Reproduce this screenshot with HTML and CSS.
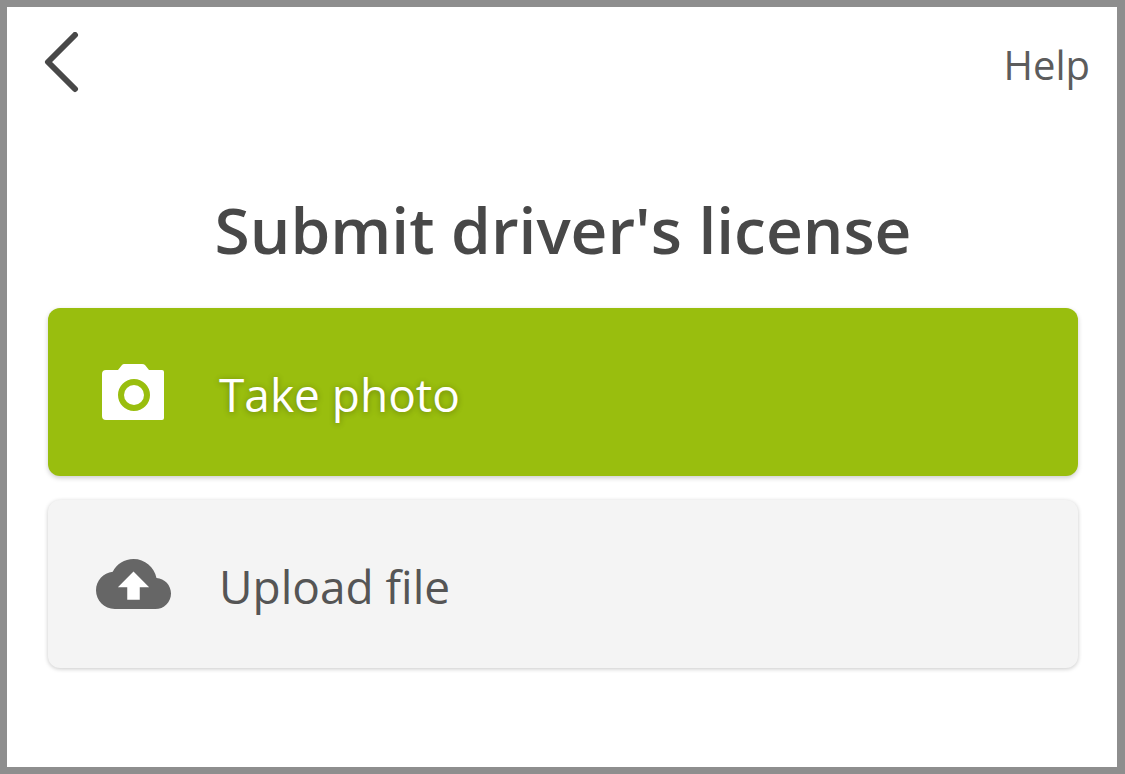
FILE: index.html
```html
<!DOCTYPE html>
<html lang="en">
<head>
<meta charset="utf-8">
<meta name="viewport" content="width=device-width, initial-scale=1">
<title>Submit driver's license</title>
<link rel="stylesheet" href="styles.css">
</head>
<body>
<div class="screen">
  <header class="topbar">
    <button class="back" type="button" aria-label="Back">
      <svg class="back-icon" viewBox="0 0 36 62" fill="none" stroke="currentColor" stroke-width="6" stroke-linecap="round" stroke-linejoin="round" aria-hidden="true"><path d="M32 3 5 30 32 57"/></svg>
    </button>
    <a class="help" href="#help">Help</a>
  </header>
  <main class="content">
    <h1 class="title">Submit driver's license</h1>
    <div class="actions">
      <button class="action action-primary" type="button">
        <svg class="action-icon" viewBox="0 0 75 56" aria-hidden="true">
          <path fill="currentColor" fill-rule="evenodd" d="M28 0h18q2 0 3 1l4 5h13q2 0 2 2v46q0 2-2 2H10q-4 0-4-4V10q0-4 4-4h12l4-5q1-1 2-1ZM38 15a16 16 0 1 0 0 32 16 16 0 0 0 0-32Z"/>
          <circle cx="38" cy="31" r="10" fill="currentColor"/>
        </svg>
        <span class="action-label">Take photo</span>
      </button>
      <button class="action action-secondary" type="button">
        <svg class="action-icon" viewBox="0 4 24 16" aria-hidden="true">
          <path fill="#666" d="M19.350 10.040C18.670 6.590 15.640 4 12 4 9.110 4 6.600 5.640 5.350 8.040 2.340 8.360 0 10.910 0 14c0 3.310 2.690 6 6 6h13c2.760 0 5-2.240 5-5 0-2.640-2.050-4.780-4.650-4.960z"/>
          <path fill="#fff" d="M14 13v4h-4v-4H7l5-5 5 5h-3z"/>
        </svg>
        <span class="action-label">Upload file</span>
      </button>
    </div>
  </main>
</div>
</body>
</html>
```
FILE: styles.css
```css
* {
  box-sizing: border-box;
}

body {
  margin: 0;
  font-family: "Open Sans", "Noto Sans", sans-serif;
  color: #484848;
}

.screen {
  min-height: 100vh;
  padding: 24px 24px 40px 32px;
  background: #fff;
  border: 7px solid #8e8e8e;
  border-right-width: 8px;
}

.topbar {
  display: flex;
  align-items: center;
  justify-content: space-between;
}

.back {
  display: flex;
  padding: 0 4px;
  border: 0;
  background: none;
  color: inherit;
  cursor: pointer;
}

.back-icon {
  width: 36px;
  height: 62px;
}

.help {
  padding: 4px 3px 0 0;
  font-size: 40px;
  line-height: 60px;
  color: #5c5c5c;
  text-decoration: none;
}

.content {
  padding: 88px 15px 0 9px;
}

.title {
  margin: 0 0 32px;
  font-size: 64px;
  font-weight: 600;
  line-height: 93px;
  text-align: center;
}

.actions {
  display: grid;
  gap: 24px;
}

.action {
  display: flex;
  align-items: center;
  gap: 48px;
  width: 100%;
  padding: 48px;
  border: 0;
  border-radius: 12px;
  font-family: inherit;
  font-size: 46px;
  line-height: 68px;
  text-align: left;
  cursor: pointer;
}

.action-label {
  padding-top: 4px;
}

.action-primary {
  background: #99be0e;
  color: #fff;
  box-shadow: 0 2px 5px rgba(0, 0, 0, 0.2);
  text-shadow: 0 1px 6px rgba(0, 0, 0, 0.3);
}

.action-secondary {
  background: #f4f4f4;
  color: #555;
  box-shadow: 0 1px 4px rgba(0, 0, 0, 0.22);
}

.action-icon {
  flex: none;
  width: 75px;
}
```
